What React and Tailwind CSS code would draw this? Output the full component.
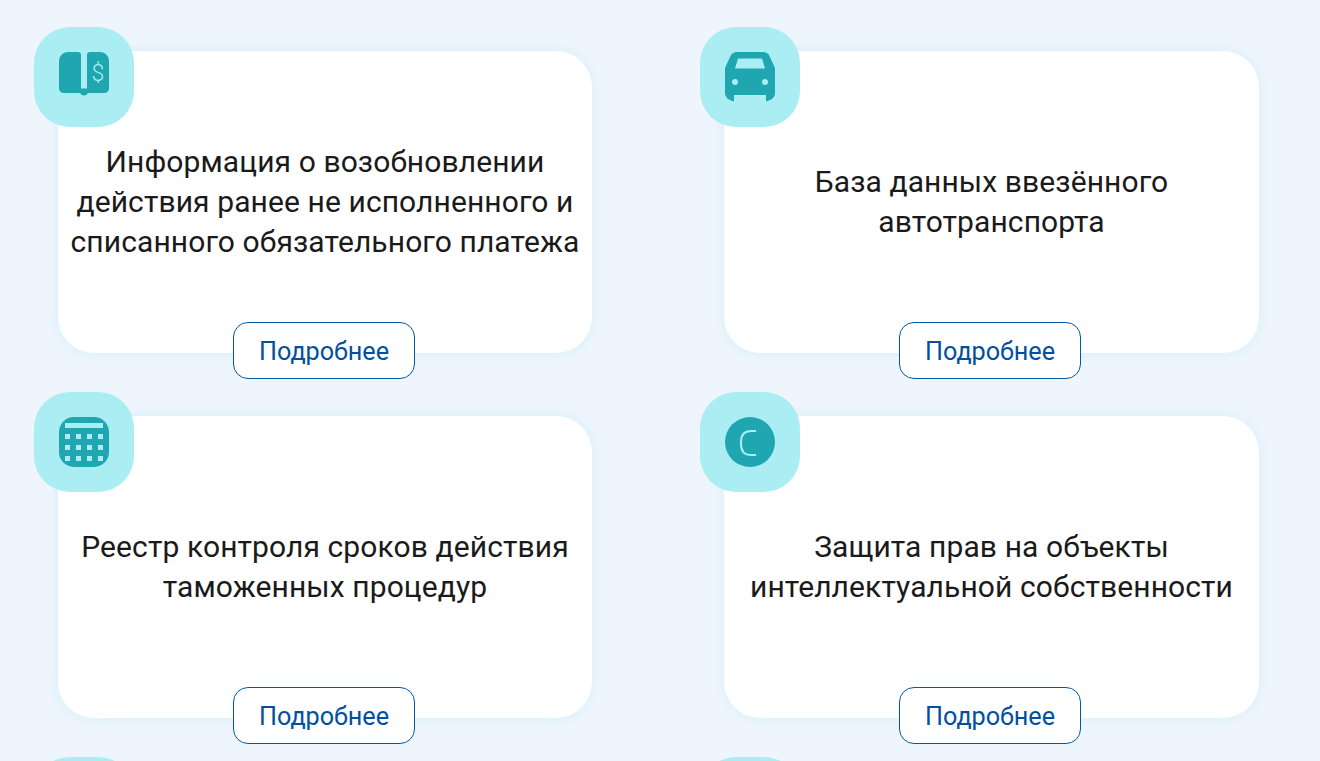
import React from 'react';

const BookIcon = () => (
  <svg width="50" height="50" viewBox="0 0 50 50">
    <path d="M9 0H19C21 0 22 1 22 3V41H5C2 41 0 39 0 36V9C0 4 4 0 9 0Z" fill="#1fa6b0" />
    <path d="M31 0H41C46 0 50 4 50 9V36C50 39 48 41 45 41H28V3C28 1 29 0 31 0Z" fill="#1fa6b0" />
    <path d="M21 36.500H29V39.500C29 42 27 43.500 25 43.500C23 43.500 21 42 21 39.500Z" fill="#1fa6b0" />
    <text x="39" y="29" textAnchor="middle" fontSize="23" fontWeight="300" fontFamily="Roboto, sans-serif" fill="#aaedf3">$</text>
  </svg>
);

const CarIcon = () => (
  <svg width="50" height="50" viewBox="0 0 50 50">
    <path
      fillRule="evenodd"
      d="M12 0H38C41 0 43 1 44.500 4L50 16V41C50 45 47 48 41 49.500V43H9V49.500C3 48 0 45 0 41V16L5.500 4C7 1 9 0 12 0ZM13 6.500L10 16.500H40L37 6.500Z"
      fill="#1fa6b0"
    />
    <circle cx="10" cy="30" r="3" fill="#aaedf3" />
    <circle cx="40" cy="30" r="3" fill="#aaedf3" />
  </svg>
);

const CalendarIcon = () => (
  <svg width="50" height="50" viewBox="0 0 50 50">
    <rect width="50" height="50" rx="15" fill="#1fa6b0" />
    <rect x="6" y="6" width="38" height="5" fill="#aaedf3" />
    {[17, 28, 39].map((y) =>
      [6, 17, 28, 39].map((x) => (
        <rect key={`${x}-${y}`} x={x} y={y} width="5" height="5" fill="#aaedf3" />
      ))
    )}
  </svg>
);

const CopyrightIcon = () => (
  <svg width="50" height="50" viewBox="0 0 50 50">
    <circle cx="25" cy="25" r="25" fill="#1fa6b0" />
    <path
      d="M31 14H26C19 14 16 18 16 25V27C16 34 19 38 26 38H31"
      fill="none"
      stroke="#aaedf3"
      strokeWidth="2"
    />
  </svg>
);

const ServiceCard = ({ icon, title }) => (
  <div className="relative h-[302px] rounded-[36px] bg-white shadow-[0_0_14px_#d3eff9] flex items-center justify-center">
    <div className="absolute -left-6 -top-6 w-[100px] h-[100px] rounded-[36px] bg-[#aaedf3] flex items-center justify-center">
      {icon}
    </div>
    {title && (
      <h3 className="text-[30px] leading-10 tracking-[0.1px] font-normal text-center text-[#1a1a1a]">{title}</h3>
    )}
    {title && (
      <a
        href="#"
        className="absolute left-[175px] -bottom-[26px] w-[182px] h-[57px] pt-0.5 rounded-[15px] border border-[#0058a6] bg-white flex items-center justify-center text-[25.2px] text-[#00509f]"
      >
        Подробнее
      </a>
    )}
  </div>
);

const cards = [
  { icon: <BookIcon />, title: <>Информация о возобновлении<br />действия ранее не исполненного и<br />списанного обязательного платежа</> },
  { icon: <CarIcon />, title: <>База данных ввезённого<br />автотранспорта</> },
  { icon: <CalendarIcon />, title: <>Реестр контроля сроков действия<br />таможенных процедур</> },
  { icon: <CopyrightIcon />, title: <>Защита прав на объекты<br />интеллектуальной собственности</> },
  { icon: null, title: null },
  { icon: null, title: null },
];

export default function App() {
  return (
    <div className="h-screen overflow-hidden bg-[#eff5fd] font-['Roboto',sans-serif]">
      <div className="grid grid-cols-[534px_535px] gap-x-[132px] gap-y-[63px] pl-[58px] pt-[51px]">
        {cards.map((card, i) => (
          <ServiceCard key={i} icon={card.icon} title={card.title} />
        ))}
      </div>
    </div>
  );
}
